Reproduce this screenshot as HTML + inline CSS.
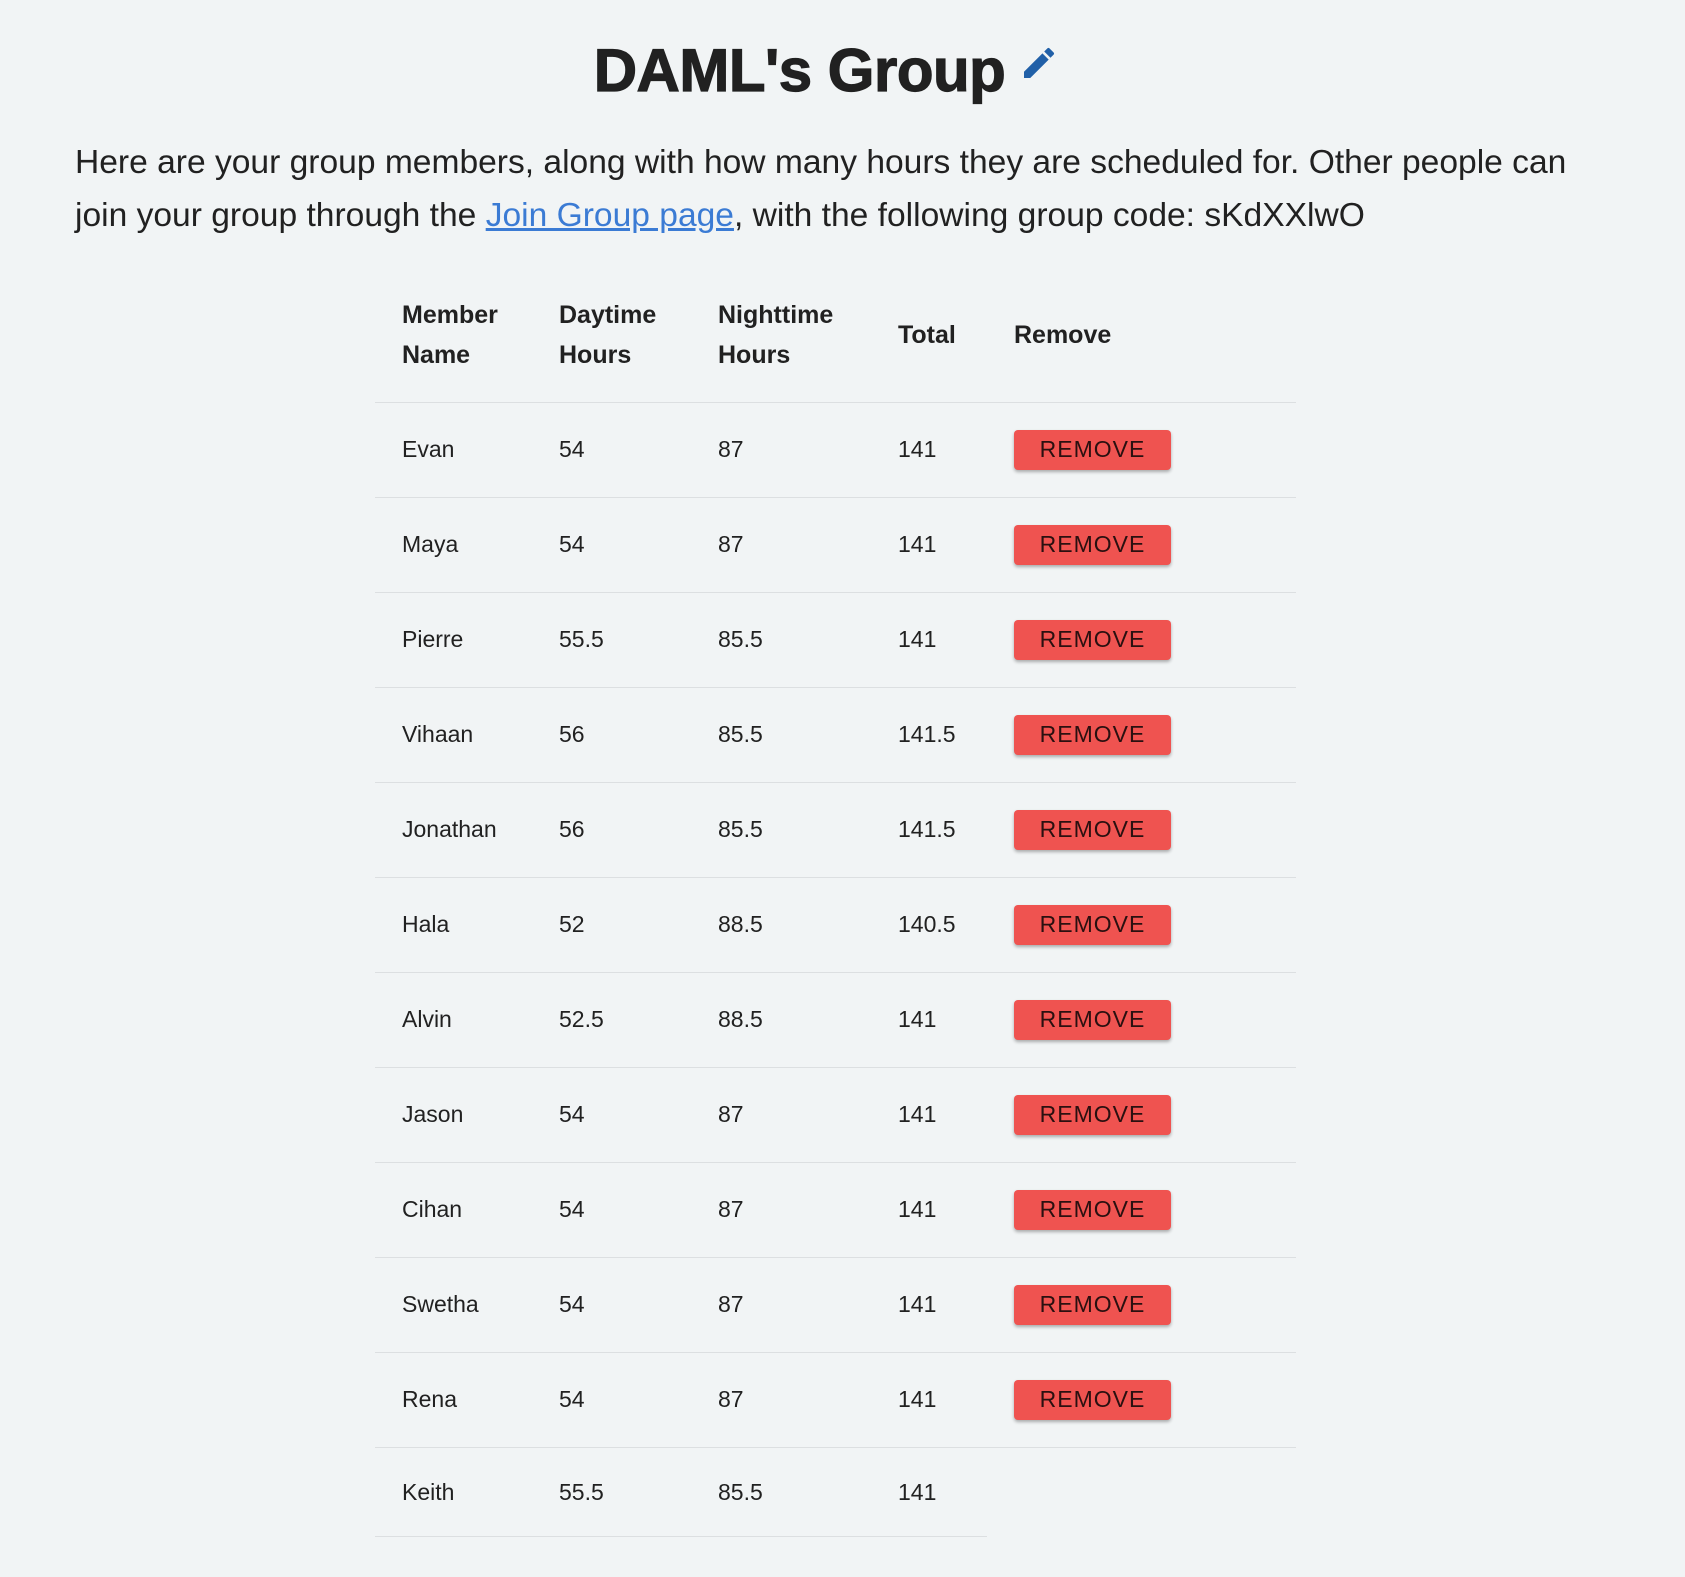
<!DOCTYPE html>
<html><head><meta charset="utf-8"><style>
body{margin:0;width:1685px;height:1577px;background:#f1f4f5;font-family:"Liberation Sans",Arial,sans-serif;color:#212121;position:relative;overflow:hidden}
h1{position:absolute;left:-16px;width:1685px;top:36px;margin:0;text-align:center;font-size:60px;font-weight:bold;line-height:70px;letter-spacing:-0.5px;-webkit-text-stroke:1.2px #212121}
h1 svg{vertical-align:middle;margin-left:14px;position:relative;top:-12px}
p{position:absolute;left:75px;top:136px;width:1540px;margin:0;font-size:33.6px;line-height:53px}
a{color:#3b7bd4;text-decoration:underline}
.row{position:absolute;left:375px;height:95px;border-bottom:1.5px solid #dcdfe1;width:921px}
.c{position:absolute;top:0;height:100%;display:flex;align-items:center;font-size:23px}
.hd .c{font-weight:bold;font-size:25px;line-height:40px;height:86px}
.c1{left:27px}.c2{left:184px}.c3{left:343px}.c4{left:523px}.c5{left:639px}
.btn{width:157px;height:40px;background:#ef5350;border-radius:4px;box-shadow:0 2px 3px rgba(0,0,0,.3);display:flex;align-items:center;justify-content:center;font-size:23px;letter-spacing:1px;color:#2a1010}
</style></head><body>
<h1>DAML's Group<svg width="40" height="40" viewBox="0 0 24 24"><path fill="#2160a8" d="M3 17.25V21h3.75L17.81 9.94l-3.75-3.75L3 17.25zM20.71 7.04a1 1 0 0 0 0-1.41l-2.34-2.34a1 1 0 0 0-1.41 0l-1.830 1.83 3.75 3.75 1.83-1.83z"/></svg></h1>
<p>Here are your group members, along with how many hours they are scheduled for. Other people can join your group through the <a>Join Group page</a>, with the following group code: sKdXXlwO</p>
<div class="row hd" style="top:292px;height:110px"><div class="c c1">Member<br>Name</div><div class="c c2">Daytime<br>Hours</div><div class="c c3">Nighttime<br>Hours</div><div class="c c4">Total</div><div class="c c5">Remove</div></div>
<div class="row" style="top:402px"><div class="c c1">Evan</div><div class="c c2">54</div><div class="c c3">87</div><div class="c c4">141</div><div class="c c5"><div class="btn">REMOVE</div></div></div>
<div class="row" style="top:497px"><div class="c c1">Maya</div><div class="c c2">54</div><div class="c c3">87</div><div class="c c4">141</div><div class="c c5"><div class="btn">REMOVE</div></div></div>
<div class="row" style="top:592px"><div class="c c1">Pierre</div><div class="c c2">55.5</div><div class="c c3">85.5</div><div class="c c4">141</div><div class="c c5"><div class="btn">REMOVE</div></div></div>
<div class="row" style="top:687px"><div class="c c1">Vihaan</div><div class="c c2">56</div><div class="c c3">85.5</div><div class="c c4">141.5</div><div class="c c5"><div class="btn">REMOVE</div></div></div>
<div class="row" style="top:782px"><div class="c c1">Jonathan</div><div class="c c2">56</div><div class="c c3">85.5</div><div class="c c4">141.5</div><div class="c c5"><div class="btn">REMOVE</div></div></div>
<div class="row" style="top:877px"><div class="c c1">Hala</div><div class="c c2">52</div><div class="c c3">88.5</div><div class="c c4">140.5</div><div class="c c5"><div class="btn">REMOVE</div></div></div>
<div class="row" style="top:972px"><div class="c c1">Alvin</div><div class="c c2">52.5</div><div class="c c3">88.5</div><div class="c c4">141</div><div class="c c5"><div class="btn">REMOVE</div></div></div>
<div class="row" style="top:1067px"><div class="c c1">Jason</div><div class="c c2">54</div><div class="c c3">87</div><div class="c c4">141</div><div class="c c5"><div class="btn">REMOVE</div></div></div>
<div class="row" style="top:1162px"><div class="c c1">Cihan</div><div class="c c2">54</div><div class="c c3">87</div><div class="c c4">141</div><div class="c c5"><div class="btn">REMOVE</div></div></div>
<div class="row" style="top:1257px"><div class="c c1">Swetha</div><div class="c c2">54</div><div class="c c3">87</div><div class="c c4">141</div><div class="c c5"><div class="btn">REMOVE</div></div></div>
<div class="row" style="top:1352px"><div class="c c1">Rena</div><div class="c c2">54</div><div class="c c3">87</div><div class="c c4">141</div><div class="c c5"><div class="btn">REMOVE</div></div></div>
<div class="row" style="top:1448px;height:88px;width:612px"><div class="c c1">Keith</div><div class="c c2">55.5</div><div class="c c3">85.5</div><div class="c c4">141</div></div>
</body></html>
